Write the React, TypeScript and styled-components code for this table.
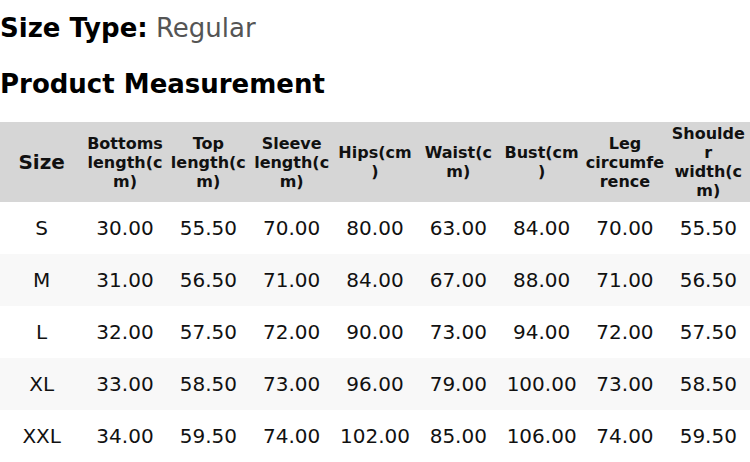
import React from "react";
import styled, { createGlobalStyle } from "styled-components";

const GlobalStyle = createGlobalStyle`
  body {
    margin: 0;
    background: #ffffff;
    font-family: "DejaVu Sans", "Liberation Sans", sans-serif;
    color: #111111;
  }
`;

const Page = styled.div`
  width: 750px;
  padding-top: 13px;
`;

const SizeType = styled.div`
  font-size: 26px;
  line-height: 30px;
  margin: 0 0 26px;
  b {
    font-weight: 700;
    color: #000000;
  }
  span {
    color: #555555;
  }
`;

const Heading = styled.h2`
  font-size: 26px;
  line-height: 30px;
  font-weight: 700;
  color: #000000;
  margin: 0 0 23px;
`;

const Table = styled.table`
  width: 100%;
  border-collapse: collapse;
  table-layout: fixed;
`;

const HeadCell = styled.th<{ $big?: boolean }>`
  background: #d6d6d6;
  height: 80px;
  padding: 0 2px;
  font-size: ${(p) => (p.$big ? "20px" : "16px")};
  line-height: 19px;
  font-weight: 700;
  color: #111111;
  text-align: center;
  vertical-align: middle;
  word-break: break-word;
  overflow-wrap: anywhere;
`;

const Row = styled.tr<{ $alt?: boolean }>`
  background: ${(p) => (p.$alt ? "#f8f8f8" : "#ffffff")};
`;

const Cell = styled.td`
  height: 52px;
  padding: 0 2px;
  font-size: 20px;
  text-align: center;
  vertical-align: middle;
  color: #111111;
`;

const columns = [
  "Bottoms length(cm)",
  "Top length(cm)",
  "Sleeve length(cm)",
  "Hips(cm)",
  "Waist(cm)",
  "Bust(cm)",
  "Leg circumference",
  "Shoulder width(cm)",
];

const rows = [
  ["S", "30.00", "55.50", "70.00", "80.00", "63.00", "84.00", "70.00", "55.50"],
  ["M", "31.00", "56.50", "71.00", "84.00", "67.00", "88.00", "71.00", "56.50"],
  ["L", "32.00", "57.50", "72.00", "90.00", "73.00", "94.00", "72.00", "57.50"],
  ["XL", "33.00", "58.50", "73.00", "96.00", "79.00", "100.00", "73.00", "58.50"],
  ["XXL", "34.00", "59.50", "74.00", "102.00", "85.00", "106.00", "74.00", "59.50"],
];

const App: React.FC = () => {
  return (
    <Page>
      <GlobalStyle />
      <SizeType>
        <b>Size Type:</b> <span>Regular</span>
      </SizeType>
      <Heading>Product Measurement</Heading>
      <Table>
        <thead>
          <tr>
            <HeadCell $big>Size</HeadCell>
            {columns.map((col) => (
              <HeadCell key={col}>{col}</HeadCell>
            ))}
          </tr>
        </thead>
        <tbody>
          {rows.map((row, index) => (
            <Row key={row[0]} $alt={index % 2 === 1}>
              {row.map((value, i) => (
                <Cell key={i}>{value}</Cell>
              ))}
            </Row>
          ))}
        </tbody>
      </Table>
    </Page>
  );
};

export default App;
